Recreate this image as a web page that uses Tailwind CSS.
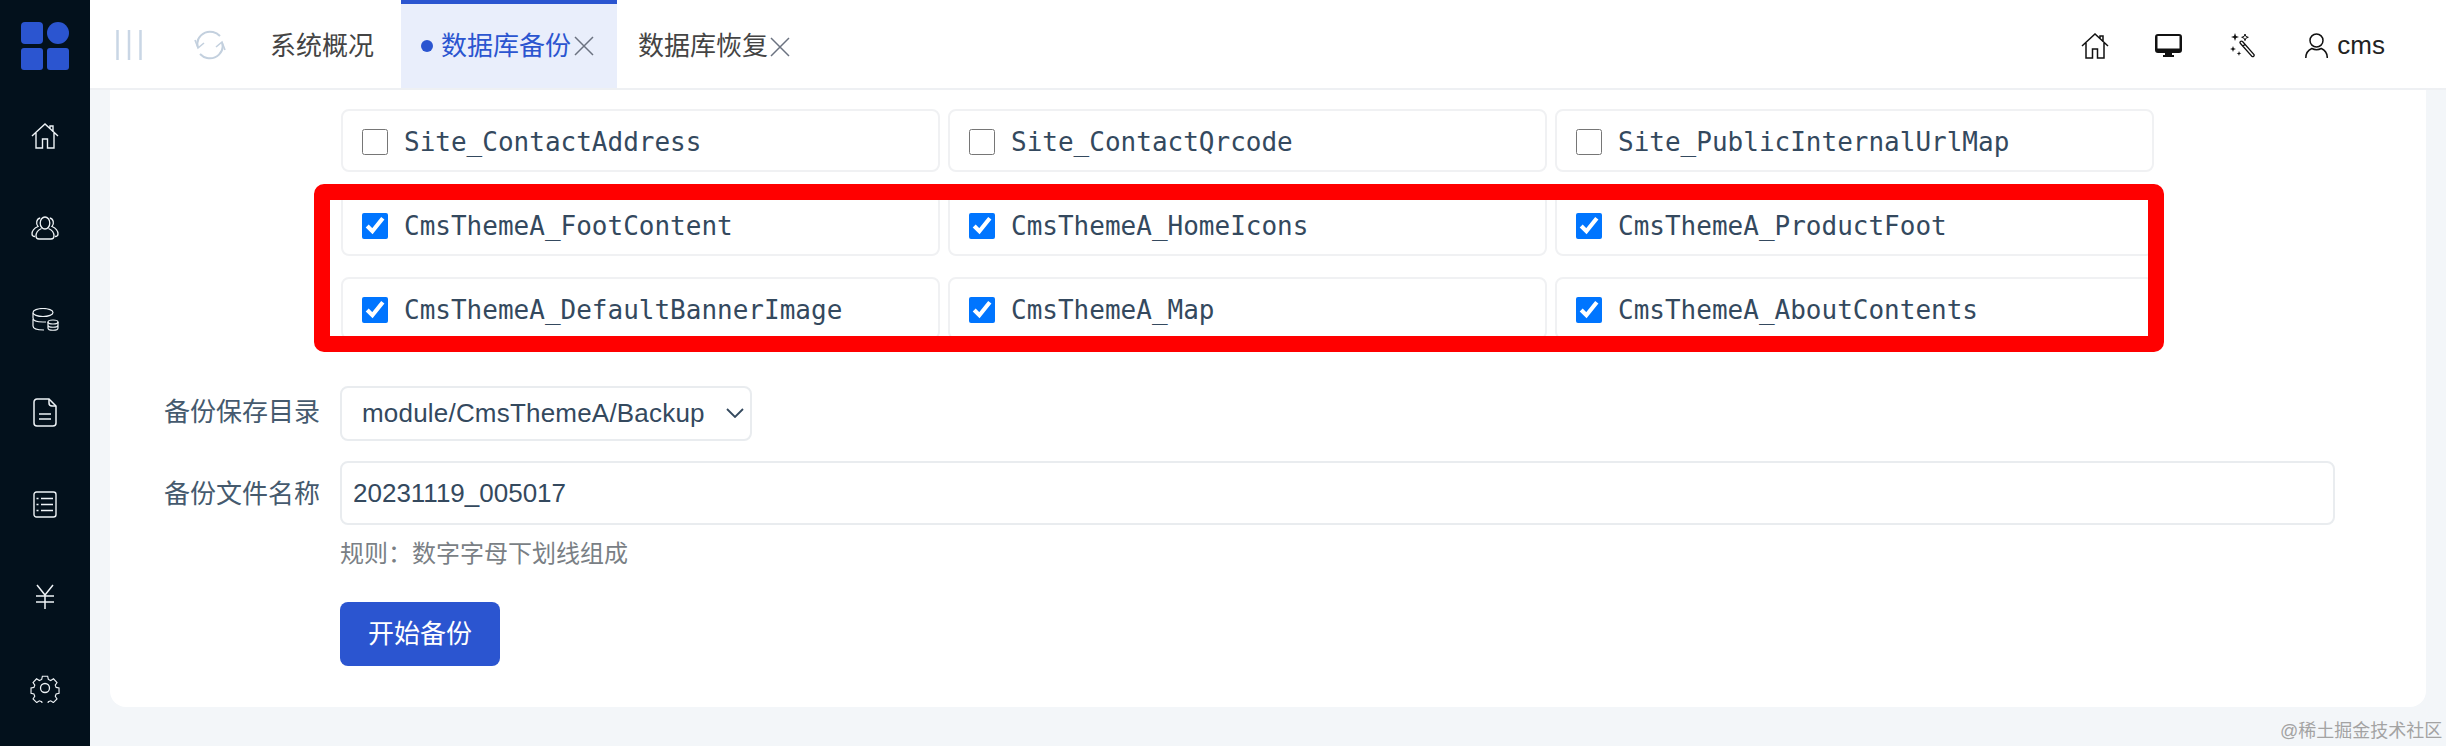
<!DOCTYPE html>
<html lang="zh-CN">
<head>
  <meta charset="UTF-8" />
  <meta name="viewport" content="width=device-width, initial-scale=1.0" />
  <title>数据库备份</title>
  <script src="https://cdn.jsdelivr.net/npm/@tailwindcss/browser@4"></script>
</head>
<body class="h-[746px] overflow-hidden bg-[#f3f6f9] text-[#34495e] [font-family:'Liberation_Sans','Noto_Sans_CJK_SC',sans-serif]">
  <div class="relative flex h-[746px]">

    <!-- sidebar -->
    <aside class="w-[90px] shrink-0 bg-[#03111c] text-[#eef3f6]">
      <div class="flex h-[90px] items-center justify-center pt-[1px]">
        <svg width="48" height="48" viewBox="0 0 48 48" fill="#2b55d0">
          <rect x="0" y="0" width="22" height="22" rx="4" />
          <ellipse cx="37" cy="11" rx="11" ry="11" />
          <rect x="0" y="26" width="22" height="22" rx="3" />
          <rect x="26" y="26" width="22" height="22" rx="3" />
        </svg>
      </div>
      <div class="flex flex-col items-center">
        <div class="flex h-[92px] w-full items-center justify-center pb-[1px]">
          <svg width="28" height="26" viewBox="0 0 28 26" fill="none" stroke="currentColor" stroke-width="1.400">
            <path d="M1 13 14 1l13 12M19 5.500V3h3v6M5 10v15h6.500v-9h5v9H23V10" />
          </svg>
        </div>
        <div class="flex h-[92px] w-full items-center justify-center">
          <svg width="28" height="24" viewBox="0 0 28 24" fill="none" stroke="currentColor" stroke-width="1.300">
            <ellipse cx="14" cy="7" rx="4.800" ry="6" />
            <path d="M10.500 12.500C7 14 5 17 5 20c0 2 1 3 3 3h12c2 0 3-1 3-3 0-3-2-6-5.500-7.500" />
            <path d="M9.200 2C5.500 2.500 4.500 8 7 10.500 3.500 12 1 15 1 18c0 1.500 1 2.500 3 2.500M18.800 2c3.700.5 4.700 6 2.200 8.500 3.500 1.500 6 4.500 6 7.500 0 1.500-1 2.500-3 2.500" />
          </svg>
        </div>
        <div class="flex h-[92px] w-full items-center justify-center">
          <svg width="27" height="24" viewBox="0 0 27 24" fill="none" stroke="currentColor" stroke-width="1.200">
            <ellipse cx="11" cy="4.500" rx="10" ry="4" />
            <path d="M1 5v5c0 2 3 4 10 4h3M1 11v7c0 3 4 4 11 4" />
            <ellipse cx="21" cy="14" rx="5" ry="2" />
            <path d="M16 14v6c0 3 10 3 10 0v-6M16 17c0 3 10 3 10 0" />
          </svg>
        </div>
        <div class="flex h-[92px] w-full items-center justify-center">
          <svg width="24" height="29" viewBox="0 0 24 29" fill="none" stroke="currentColor" stroke-width="1.500">
            <path d="M4 1h12l7 7v17a3 3 0 0 1-3 3H4a3 3 0 0 1-3-3V4a3 3 0 0 1 3-3Z" />
            <path d="M16 1v4a3 3 0 0 0 3 3h4M6 16h12M6 21h12" />
          </svg>
        </div>
        <div class="flex h-[92px] w-full items-center justify-center">
          <svg width="24" height="27" viewBox="0 0 24 27" fill="none" stroke="currentColor" stroke-width="1.400">
            <rect x="1" y="1" width="22" height="25" rx="2.500" />
            <path d="M8 7.500h12M8 13.500h12M8 19.500h12M3.500 7.500h2M3.500 13.500h2M3.500 19.500h2" />
          </svg>
        </div>
        <div class="flex h-[92px] w-full items-center justify-center">
          <svg width="20" height="25" viewBox="0 0 20 25" fill="none" stroke="currentColor" stroke-width="1.500">
            <path d="M2 1l8 10 8-10M1 12h18M1 18h18M10 11v14" />
          </svg>
        </div>
        <div class="flex h-[92px] w-full items-center justify-center">
          <svg width="30" height="30" viewBox="0 0 30 30" fill="none" stroke="currentColor" stroke-width="1.300">
            <circle cx="15" cy="15" r="4.500" />
            <path d="M12 1.500h6l.8 3.700 2.700 1.200 3.200-2 4 4.300-2 3 1 2.600 3.300.7v6l-3.300.8-1 2.600 2 3-4.200 4.200-3-2-2.700 1-.8 3.400h-6l-.8-3.400-2.700-1-3 2-4.200-4.200 2-3-1-2.600-3.300-.8v-6l3.300-.7 1-2.600-2-3 4-4.300 3.200 2 2.700-1.200Z" transform="translate(1.900 1.900) scale(.875)" />
          </svg>
        </div>
      </div>
    </aside>

    <div class="flex min-w-0 flex-1 flex-col">
      <!-- header tabs -->
      <header class="flex h-[90px] shrink-0 items-stretch border-b-2 border-[#eef0f3] bg-white text-[26px] text-[#444]">
        <div class="flex w-[104px] items-center justify-center pt-[2px] pr-[26px]">
          <svg width="26" height="30" viewBox="0 0 26 30" fill="none" stroke="#c9d6e5" stroke-width="2.500">
            <path d="M1.500 0v30M13 0v30M24.500 0v30" />
          </svg>
        </div>
        <div class="flex w-[76px] items-center pt-[2px]">
          <svg width="32" height="30" viewBox="0 0 32 30" fill="none" stroke="#c3d0de" stroke-width="2">
            <path d="M4 17C1 8 10 0 19 2c3 .6 5 2 7 4M28 13c3 9-6 17-15 15-3-.6-5-2-7-4" />
            <path d="M1 10l3 8 6-5M31 20l-3-8-6 5" stroke-width="1.600" />
          </svg>
        </div>
        <div class="flex w-[131px] items-center pt-[5px]">系统概况</div>
        <div class="flex w-[216px] items-center border-t-4 border-[#2b55d0] bg-[#e9eefb] pl-5 text-[#2b55d0]">
          <span class="mr-2 h-3 w-3 rounded-full bg-[#2b55d0]"></span>
          <span>数据库备份</span>
          <svg class="ml-[3px]" width="20" height="20" viewBox="0 0 20 20" fill="none" stroke="#6b7280" stroke-width="1.500"><path d="M1 1l18 18M19 1 1 19" /></svg>
        </div>
        <div class="flex items-center pt-[5px] pl-[21px]">
          <span>数据库恢复</span>
          <svg class="ml-[2px]" width="20" height="20" viewBox="0 0 20 20" fill="none" stroke="#6b7280" stroke-width="1.500"><path d="M1 1l18 18M19 1 1 19" /></svg>
        </div>
        <div class="ml-auto flex items-center pt-[3px] pr-[61px] text-[#222]">
          <svg class="mr-[46px]" width="28" height="26" viewBox="0 0 28 26" fill="none" stroke="#111" stroke-width="1.500">
            <path d="M1 13 14 1l13 12M19 5.500V3h3v6M5 10v15h6.500v-9h5v9H23V10" />
          </svg>
          <svg class="mr-[48px]" width="27" height="23" viewBox="0 0 27 23" fill="#111">
            <path fill-rule="evenodd" d="M3 0h21a3 3 0 0 1 3 3v13a3 3 0 0 1-3 3h-7v2h2v2H8v-2h2v-2H3a3 3 0 0 1-3-3V3a3 3 0 0 1 3-3Zm-.5 2v12.500h22V2Z" />
          </svg>
          <svg class="mr-[50px]" width="25" height="25" viewBox="0 0 25 25" fill="none" stroke="#111" stroke-width="1.300">
            <path d="M12.500 8.500l11.500 13a1.500 1.500 0 0 1-2 2L10.500 10.500a1.400 1.400 0 0 1 2-2ZM13 13l2.500-2" />
            <path fill="#111" stroke="none" d="M5 0l1 3 3 1-3 1-1 3-1-3-3-1 3-1ZM3 13l.8 2.200L6 16l-2.200.8L3 19l-.8-2.200L0 16l2.200-.8ZM9 18l.6 1.700 1.700.6-1.700.6L9 23l-.6-1.800-1.700-.6 1.700-.6Z" />
            <path stroke-width="1" d="M15 1l.9 2.400 2.400.9-2.400.9L15 7.600l-.9-2.400-2.400-.9 2.400-.9Z" />
          </svg>
          <svg class="mr-[9px]" width="23" height="25" viewBox="0 0 23 25" fill="none" stroke="#111" stroke-width="1.500">
            <circle cx="11.500" cy="7.500" r="6.500" />
            <path d="M.8 25c0-5 2.500-8 6-9.500 3 1.500 6.500 1.500 9.500 0 3.500 1.500 6 4.500 6 9.500" />
          </svg>
          <span>cms</span>
        </div>
      </header>

      <!-- main card -->
      <main class="flex-1 pr-5 pl-5">
        <div class="h-[617px] rounded-b-2xl bg-white pt-[19px] pl-[231px]">
          <div class="grid grid-cols-[repeat(3,599px)] gap-x-2 gap-y-[21px] [font-family:'DejaVu_Sans_Mono',monospace] text-[26px]">
            <label class="flex h-[63px] items-center gap-[16px] rounded-lg border-2 border-[#f0f1f3] pt-[3px] pl-[19px]"><input type="checkbox" class="m-0 h-[26px] w-[26px] shrink-0" /><span>Site_ContactAddress</span></label>
            <label class="flex h-[63px] items-center gap-[16px] rounded-lg border-2 border-[#f0f1f3] pt-[3px] pl-[19px]"><input type="checkbox" class="m-0 h-[26px] w-[26px] shrink-0" /><span>Site_ContactQrcode</span></label>
            <label class="flex h-[63px] items-center gap-[16px] rounded-lg border-2 border-[#f0f1f3] pt-[3px] pl-[19px]"><input type="checkbox" class="m-0 h-[26px] w-[26px] shrink-0" /><span>Site_PublicInternalUrlMap</span></label>
            <label class="flex h-[63px] items-center gap-[16px] rounded-lg border-2 border-[#f0f1f3] pt-[3px] pl-[19px]"><input type="checkbox" checked class="m-0 h-[26px] w-[26px] shrink-0" /><span>CmsThemeA_FootContent</span></label>
            <label class="flex h-[63px] items-center gap-[16px] rounded-lg border-2 border-[#f0f1f3] pt-[3px] pl-[19px]"><input type="checkbox" checked class="m-0 h-[26px] w-[26px] shrink-0" /><span>CmsThemeA_HomeIcons</span></label>
            <label class="flex h-[63px] items-center gap-[16px] rounded-lg border-2 border-[#f0f1f3] pt-[3px] pl-[19px]"><input type="checkbox" checked class="m-0 h-[26px] w-[26px] shrink-0" /><span>CmsThemeA_ProductFoot</span></label>
            <label class="flex h-[63px] items-center gap-[16px] rounded-lg border-2 border-[#f0f1f3] pt-[3px] pl-[19px]"><input type="checkbox" checked class="m-0 h-[26px] w-[26px] shrink-0" /><span>CmsThemeA_DefaultBannerImage</span></label>
            <label class="flex h-[63px] items-center gap-[16px] rounded-lg border-2 border-[#f0f1f3] pt-[3px] pl-[19px]"><input type="checkbox" checked class="m-0 h-[26px] w-[26px] shrink-0" /><span>CmsThemeA_Map</span></label>
            <label class="flex h-[63px] items-center gap-[16px] rounded-lg border-2 border-[#f0f1f3] pt-[3px] pl-[19px]"><input type="checkbox" checked class="m-0 h-[26px] w-[26px] shrink-0" /><span>CmsThemeA_AboutContents</span></label>
          </div>

          <!-- backup form -->
          <div class="mt-[46px] -ml-[177px] flex items-center gap-[20px] text-[26px] text-[#455a6e]">
            <span class="w-[156px] shrink-0 whitespace-nowrap pb-[3px] text-right">备份保存目录</span>
            <div class="relative">
              <select class="h-[55px] w-[412px] appearance-none rounded-lg border-2 border-[#e9ecef] bg-white pl-5 text-[26px] tracking-[0.2px] text-[#34495e]">
                <option>module/CmsThemeA/Backup</option>
              </select>
              <svg class="pointer-events-none absolute top-[22px] right-[8px]" width="18" height="10" viewBox="0 0 18 10" fill="none" stroke="#34495e" stroke-width="1.800"><path d="M1 1l8 8 8-8" /></svg>
            </div>
          </div>
          <div class="mt-5 -ml-[177px] flex items-start gap-[20px] text-[26px] text-[#455a6e]">
            <span class="w-[156px] shrink-0 whitespace-nowrap pt-[14px] text-right">备份文件名称</span>
            <div>
              <input type="text" value="20231119_005017" class="block h-[64px] w-[1995px] rounded-lg border-2 border-[#e9ecef] bg-white pl-[11px] text-[26px] text-[#34495e]" />
              <p class="mt-[15px] text-[24px] leading-[28px] text-[#7a7f85]">规则：数字字母下划线组成</p>
              <button class="mt-[34px] h-[64px] w-[160px] rounded-lg bg-[#2b55d0] text-[26px] text-white">开始备份</button>
            </div>
          </div>
        </div>
      </main>
    </div>

    <!-- red annotation box -->
    <div class="pointer-events-none absolute top-[184px] left-[314px] h-[168px] w-[1850px] rounded-[10px] border-[16px] border-[#ff0000]"></div>
    <div class="absolute top-[718px] left-[2280px] text-[18px] text-[#a3a3a3]">@稀土掘金技术社区</div>
  </div>
</body>
</html>
